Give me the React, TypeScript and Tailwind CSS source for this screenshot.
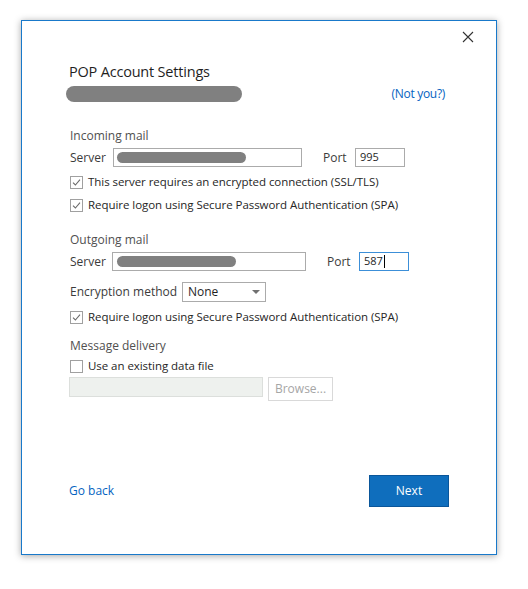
import { useState } from 'react'

function Check({ checked, label }: { checked?: boolean; label: string }) {
    return (
        <label className="flex items-center h-[16px] gap-[5px] text-[#262626]">
            <span className="w-[13px] h-[13px] border border-[#a0a0a0] bg-white flex items-center justify-center">
                {checked && (
                    <svg width="9" height="9" viewBox="0 0 9 9">
                        <path d="M1 4.6 L3.4 7 L8 1.6" fill="none" stroke="#6b6b6b" strokeWidth="1.1" />
                    </svg>
                )}
            </span>
            <span className="text-[11.5px] tracking-[-0.05px]">{label}</span>
        </label>
    )
}

function Blur({ w }: { w: number }) {
    return <span className="block h-[11px] rounded-full bg-[#808080]" style={{ width: w }} />
}

export default function App() {
    const [port] = useState('587')

    return (
        <div className="w-[528px] h-[589px] bg-white pt-[20px] pl-[21px] font-['Open_Sans',sans-serif] text-[12px]">
            <div className="relative w-[476px] h-[535px] border border-[#1979ca] bg-white shadow-[0_1px_7px_rgba(0,0,0,0.35)] flex flex-col pl-[48px] pt-[41px] pb-[47px]">
                {/* close */}
                <button className="absolute top-[10px] right-[22px] w-[12px] h-[12px]">
                    <svg width="12" height="12" viewBox="0 0 12 12">
                        <path d="M1 1 L11 11 M11 1 L1 11" stroke="#333" strokeWidth="1.1" />
                    </svg>
                </button>

                <h1 className="h-[20px] leading-[20px] text-[14.5px] tracking-[-0.2px] text-[#1f1f1f] -ml-[1px]">POP Account Settings</h1>
                <div className="mt-[4px] h-[16px] flex items-center -ml-[4px] pr-[51px]">
                    <span className="block w-[176px] h-[16px] rounded-full bg-[#808080]" />
                    <a className="ml-auto text-[#0563c1] text-[12px] tracking-[-0.3px]">(Not you?)</a>
                </div>

                <div className="mt-[26px] h-[16px] leading-[16px] text-[#505050]">Incoming mail</div>
                <div className="mt-[4px] h-[19px] flex items-center text-[#3b3b3b]">
                    <span className="w-[43px]">Server</span>
                    <div className="w-[189px] h-[19px] border border-[#ababab] flex items-center pl-[3px]">
                        <Blur w={129} />
                    </div>
                    <span className="ml-[21px] w-[32px]">Port</span>
                    <div className="w-[50px] h-[19px] border border-[#ababab] flex items-center pl-[4px] text-[11px] text-[#1f1f1f]">995</div>
                </div>
                <div className="mt-[7px]">
                    <Check checked label="This server requires an encrypted connection (SSL/TLS)" />
                </div>
                <div className="mt-[7px]">
                    <Check checked label="Require logon using Secure Password Authentication (SPA)" />
                </div>

                <div className="mt-[19px] h-[16px] leading-[16px] text-[#505050]">Outgoing mail</div>
                <div className="mt-[4px] h-[19px] flex items-center text-[#3b3b3b]">
                    <span className="w-[42px]">Server</span>
                    <div className="w-[194px] h-[19px] border border-[#ababab] flex items-center pl-[4px]">
                        <Blur w={119} />
                    </div>
                    <span className="ml-[21px] w-[32px]">Port</span>
                    <div className="w-[50px] h-[19px] border border-[#3c8fd8] flex items-center pl-[4px] text-[11px] text-[#1f1f1f]">
                        {port}
                        <span className="ml-[1px] w-[1px] h-[13px] bg-black" />
                    </div>
                </div>
                <div className="mt-[11px] h-[20px] flex items-center text-[#3b3b3b]">
                    <span className="w-[112px]">Encryption method</span>
                    <div className="w-[84px] h-[20px] border border-[#ababab] flex items-center pl-[5px] pr-[5px] text-[#1f1f1f]">
                        <span>None</span>
                        <svg className="ml-auto" width="8" height="4" viewBox="0 0 8 4">
                            <path d="M0 0 H8 L4 4 Z" fill="#707070" />
                        </svg>
                    </div>
                </div>
                <div className="mt-[7px]">
                    <Check checked label="Require logon using Secure Password Authentication (SPA)" />
                </div>

                <div className="mt-[13px] h-[16px] leading-[16px] text-[#505050]">Message delivery</div>
                <div className="mt-[4px]">
                    <Check label="Use an existing data file" />
                </div>
                <div className="mt-[3px] flex items-start -ml-[1px]">
                    <div className="w-[194px] h-[20px] border border-[#dcdfdc] bg-[#eef1ee]" />
                    <button className="ml-[5px] w-[65px] h-[24px] border border-[#d9d9d9] bg-white text-[#a6a6a6]">Browse...</button>
                </div>

                <div className="mt-auto flex items-center pr-[47px] -ml-[1px]">
                    <a className="text-[#0563c1]">Go back</a>
                    <button className="ml-auto w-[80px] h-[32px] bg-[#0f6ebd] border border-[#0a569a] text-white">Next</button>
                </div>
            </div>
        </div>
    )
}
